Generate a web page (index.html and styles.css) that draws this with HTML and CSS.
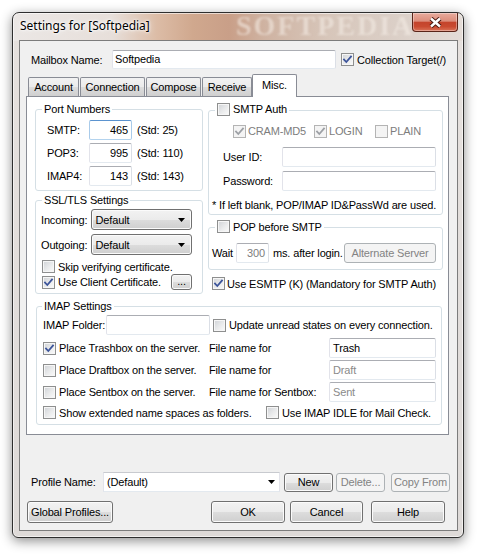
FILE: index.html
```html
<!DOCTYPE html>
<html>
<head>
<meta charset="utf-8">
<title>Settings for [Softpedia]</title>
<link rel="stylesheet" href="styles.css">
</head>
<body>
<div class="window">
  <div class="titlebar">
    <span class="title">Settings for [Softpedia]</span>
    <span class="wm-title">SOFTPEDIA</span>
    <span class="close"><svg width="13" height="11" viewBox="0 0 13 11"><path class="x-out" d="M2 1.5 11 9.5M11 1.5 2 9.5"/><path class="x-in" d="M2 1.5 11 9.5M11 1.5 2 9.5"/></svg></span>
  </div>
  <div class="client">
    <div class="mailbox">
      <span class="lbl-mailbox">Mailbox Name:</span>
      <span class="tb tb-mailbox">Softpedia</span>
      <span class="cb on cb-target"><svg viewBox="0 0 11 11"><path d="M2 5.5 4.3 8 9 2.5"/></svg></span>
      <span class="cbt">Collection Target(/)</span>
    </div>
    <div class="tabstrip">
      <span class="tab t-account">Account</span>
      <span class="tab t-connection">Connection</span>
      <span class="tab t-compose">Compose</span>
      <span class="tab t-receive">Receive</span>
      <span class="tab sel t-misc">Misc.</span>
    </div>
    <div class="panel">
      <div class="col">
        <fieldset class="grp grp-port">
          <legend>Port Numbers</legend>
          <div class="gbody port-body">
            <div class="prow"><span class="plbl">SMTP:</span><span class="tb num focus">465</span><span class="std">(Std: 25)</span></div>
            <div class="prow"><span class="plbl">POP3:</span><span class="tb num">995</span><span class="std">(Std: 110)</span></div>
            <div class="prow"><span class="plbl">IMAP4:</span><span class="tb num">143</span><span class="std">(Std: 143)</span></div>
          </div>
        </fieldset>
        <fieldset class="grp grp-ssl">
          <legend>SSL/TLS Settings</legend>
          <div class="gbody ssl-body">
            <div class="srow"><span class="slbl">Incoming:</span><span class="dd">Default<svg class="arr" width="7" height="4" viewBox="0 0 7 4"><path d="M0 0H7L3.5 4Z"/></svg></span></div>
            <div class="srow srow2"><span class="slbl">Outgoing:</span><span class="dd">Default<svg class="arr" width="7" height="4" viewBox="0 0 7 4"><path d="M0 0H7L3.5 4Z"/></svg></span></div>
            <div class="crow crow-skip"><span class="cb"></span><span class="cbt">Skip verifying certificate.</span></div>
            <div class="crow crow-client"><span class="cb on"><svg viewBox="0 0 11 11"><path d="M2 5.5 4.3 8 9 2.5"/></svg></span><span class="cbt">Use Client Certificate.</span><span class="btn btn-dots">...</span></div>
          </div>
        </fieldset>
      </div>
      <div class="col">
        <fieldset class="grp grp-auth">
          <legend><span class="leg"><span class="cb"></span><span class="cbt">SMTP Auth</span></span></legend>
          <div class="gbody auth-body">
            <div class="arow">
              <span class="am am-cram"><span class="cb on dis"><svg viewBox="0 0 11 11"><path d="M2 5.5 4.3 8 9 2.5"/></svg></span><span class="cbt dtext">CRAM-MD5</span></span>
              <span class="am am-login"><span class="cb on dis"><svg viewBox="0 0 11 11"><path d="M2 5.5 4.3 8 9 2.5"/></svg></span><span class="cbt dtext">LOGIN</span></span>
              <span class="am"><span class="cb dis"></span><span class="cbt dtext">PLAIN</span></span>
            </div>
            <div class="urow urow-id"><span class="ulbl">User ID:</span><span class="tb tb-user"></span></div>
            <div class="urow urow-pw"><span class="ulbl">Password:</span><span class="tb tb-user"></span></div>
            <div class="note">* If left blank, POP/IMAP ID&amp;PassWd are used.</div>
          </div>
        </fieldset>
        <fieldset class="grp grp-pop">
          <legend><span class="leg"><span class="cb"></span><span class="cbt">POP before SMTP</span></span></legend>
          <div class="gbody pop-body">
            <div class="wrow"><span class="wlbl">Wait</span><span class="tb num tb-wait dtext">300</span><span class="after">ms. after login.</span><span class="btn dis btn-alt">Alternate Server</span></div>
          </div>
        </fieldset>
        <div class="crow esmtp"><span class="cb on"><svg viewBox="0 0 11 11"><path d="M2 5.5 4.3 8 9 2.5"/></svg></span><span class="cbt cbt-tight">Use ESMTP (K) (Mandatory for SMTP Auth)</span></div>
      </div>
      <fieldset class="grp grp-imap">
        <legend>IMAP Settings</legend>
        <div class="gbody imap-body">
          <div class="frow"><span class="flbl">IMAP Folder:</span><span class="tb tb-folder"></span><span class="cb cb-update"></span><span class="cbt">Update unread states on every connection.</span></div>
          <div class="irow irow1"><span class="ic"><span class="cb on"><svg viewBox="0 0 11 11"><path d="M2 5.5 4.3 8 9 2.5"/></svg></span><span class="cbt">Place Trashbox on the server.</span></span><span>File name for</span><span class="tb tb-file">Trash</span></div>
          <div class="irow"><span class="ic"><span class="cb"></span><span class="cbt">Place Draftbox on the server.</span></span><span>File name for</span><span class="tb tb-file dtext2">Draft</span></div>
          <div class="irow irow3"><span class="ic"><span class="cb"></span><span class="cbt">Place Sentbox on the server.</span></span><span>File name for Sentbox:</span><span class="tb tb-file dtext2">Sent</span></div>
          <div class="xrow"><span class="ic"><span class="cb"></span><span class="cbt">Show extended name spaces as folders.</span></span><span class="ic"><span class="cb"></span><span class="cbt">Use IMAP IDLE for Mail Check.</span></span></div>
        </div>
      </fieldset>
    </div>
    <div class="profile">
      <span class="lbl-profile">Profile Name:</span>
      <span class="combo">(Default)<svg class="arr" width="7" height="4" viewBox="0 0 7 4"><path d="M0 0H7L3.5 4Z"/></svg></span>
      <span class="btn btn-new">New</span>
      <span class="btn dis btn-del">Delete...</span>
      <span class="btn dis btn-copy">Copy From</span>
    </div>
    <div class="actions">
      <span class="btn btn-global">Global Profiles...</span>
      <span class="btn btn-ok">OK</span>
      <span class="btn btn-cancel">Cancel</span>
      <span class="btn btn-help">Help</span>
    </div>
  </div>
</div>
</body>
</html>
```

FILE: styles.css
```css
* { box-sizing: border-box; }
html, body { margin: 0; background: #fff; }
body {
  width: 485px; height: 558px; overflow: hidden;
  font-family: "Liberation Sans", Arial, sans-serif;
  font-size: 11px; color: #000;
  letter-spacing: -0.15px;
  white-space: nowrap;
}

/* ---------- window frame ---------- */
.window {
  position: relative;
  margin: 12px 0 0 12px;
  width: 452px; height: 526px;
  border: 1px solid #2e2e2e;
  border-radius: 7px 7px 6px 6px;
  padding: 0 5px 6px 6px;
  display: flex; flex-direction: column;
  background:
    linear-gradient(to right, #ebe7e5 0%, #e7dfda 22%, #dcbca6 32%, #d0a88e 40%, #c99f88 48%, #cfb3a2 56%, #d7c6ba 70%, #dbcfc7 85%, #e4dcd7 100%) top left / 100% 28px no-repeat,
    linear-gradient(#e6e1de, #dedad8);
  box-shadow: 0 3px 12px rgba(0,0,0,.45), inset 0 0 0 1px rgba(255,255,255,.6);
}
.titlebar {
  position: relative;
  height: 27px; flex: none;
  display: flex; align-items: flex-start;
}
.title {
  margin: 5px 0 0 1px;
  font-family: "Noto Sans", "Liberation Sans", sans-serif;
  font-size: 12px; line-height: 16px; letter-spacing: 0;
  text-shadow: 0 0 6px #fff, 0 0 3px #fff, 0 0 2px #fff;
  position: relative; z-index: 1;
}
.wm-title {
  position: absolute; left: 217px; top: -3px;
  font: bold 28px "Liberation Serif", serif;
  letter-spacing: 2px;
  color: rgba(245, 238, 232, .55);
  filter: blur(1.3px);
  pointer-events: none;
}
.close {
  margin-left: auto;
  position: relative; z-index: 1;
  width: 46px; height: 19px;
  border: 1px solid #5a2418; border-top: none;
  border-radius: 0 0 4px 4px;
  background: linear-gradient(#e8ab9d 0%, #dc8d7b 45%, #c4442c 52%, #c94a30 75%, #da7358 100%);
  box-shadow: inset 0 0 0 1px rgba(255,255,255,.35);
  display: flex; align-items: center; justify-content: center;
}
.x-out { stroke: #45170f; stroke-width: 4.4; fill: none; }
.x-in { stroke: #fff; stroke-width: 2.4; fill: none; }

.client {
  flex: 1;
  border: 1px solid #7c7c7c;
  background: #f0f0f0;
  display: flex; flex-direction: column;
}

/* ---------- controls ---------- */
.tb {
  display: block; flex: none;
  height: 20px; line-height: 18px;
  padding: 0 3px;
  background: #fff;
  border: 1px solid; border-color: #abadb3 #dbdfe6 #e3e9ef #e2e3ea;
  border-radius: 2px;
  overflow: hidden;
}
.num { width: 43px; text-align: right; }
.focus { border-color: #5b93cf #a9cbea #b3d3ee #a9cbea; }
.cb {
  display: inline-flex; flex: none;
  width: 13px; height: 13px;
  border: 1px solid #8e8f8f;
  background: linear-gradient(135deg, #cfd2d6 0%, #eaebec 55%, #fbfbfb 100%);
  box-shadow: inset 0 0 0 1px #f6f6f6;
  align-items: center; justify-content: center;
}
.cb svg { width: 11px; height: 11px; }
.cb path { fill: none; stroke: #3c549a; stroke-width: 1.8; stroke-linecap: square; }
.cb.dis { border-color: #b4b4b4; background: #f4f4f4; box-shadow: none; }
.cb.dis path { stroke: #9da0a5; }
.cbt { margin-left: 3px; }
.cbt-tight { margin-left: 2px; }
.dtext { color: #7d7d7d; }
.dtext2 { color: #8a8a8a; }
.btn {
  display: flex; flex: none; align-items: center; justify-content: center;
  border: 1px solid #707070; border-radius: 3px;
  background: linear-gradient(#f2f2f2 0%, #ebebeb 50%, #dddddd 51%, #cfcfcf 100%);
  box-shadow: inset 0 0 0 1px #fbfbfb;
}
.btn.dis {
  border-color: #adb2b5; background: #f4f4f4; box-shadow: none; color: #838383;
}
.dd {
  display: flex; align-items: center; justify-content: space-between;
  width: 104px; height: 21px;
  padding: 0 6px 0 4px;
  border: 1px solid #707070; border-radius: 3px;
  background: linear-gradient(#f2f2f2 0%, #ebebeb 50%, #dddddd 51%, #cfcfcf 100%);
  box-shadow: inset 0 0 0 1px #fbfbfb;
}
.arr path { fill: #000; }

/* ---------- top row ---------- */
.mailbox {
  display: flex; align-items: center;
  height: 19px; margin-top: 9px; padding-left: 11px;
}
.lbl-mailbox { width: 81px; }
.tb-mailbox { width: 224px; height: 19px; line-height: 17px; padding-left: 2px; }
.cb-target { margin-left: 5px; }

/* ---------- tabs ---------- */
.tabstrip {
  position: relative; z-index: 1;
  display: flex; align-items: flex-end;
  height: 22px; margin: 5px 0 0 8px;
}
.tab {
  height: 19px; line-height: 18px; text-align: center;
  border: 1px solid #898c95; border-bottom: none;
  border-radius: 2px 2px 0 0;
  background: linear-gradient(#f2f2f2 0%, #ebebeb 50%, #dddddd 51%, #cfcfcf 100%);
  margin-right: 1px;
}
.t-account { width: 51px; }
.t-connection { width: 65px; }
.t-compose { width: 55px; }
.t-receive { width: 50px; margin-right: 0; }
.tab.sel {
  width: 45px; height: 23px; line-height: 20px;
  margin-bottom: -1px; background: #fff;
}

.panel {
  flex: none;
  width: 423px; height: 339px;
  margin-left: 6px;
  border: 1px solid #898c95;
  background: #fff;
  padding: 5px 0 0 8px;
  display: grid;
  grid-template-columns: 168px 235px;
  column-gap: 5px;
  align-content: start; align-items: start;
}
.col { display: flex; flex-direction: column; }

.grp {
  margin: 0; min-width: 0;
  border: 1px solid #d5dfe5; border-radius: 3px;
  padding: 0;
}
.grp legend { padding: 0 2px; margin-left: 6px; line-height: 14px; }
.leg { display: inline-flex; align-items: center; height: 14px; }

/* port numbers */
.grp-port { padding: 4px 0 4px 0; }
.port-body { padding-left: 11px; }
.prow { display: flex; align-items: center; height: 20px; }
.prow + .prow { margin-top: 3px; }
.plbl { width: 42px; }
.std { margin-left: 5px; }

/* ssl */
.grp-ssl { margin-top: 2px; padding: 2px 0 3px 0; }
.ssl-body { padding: 0 10px 0 5px; }
.srow { display: flex; align-items: center; height: 21px; }
.srow2 { margin-top: 4px; }
.slbl { width: 51px; }
.crow { display: flex; align-items: center; }
.crow-skip { height: 15px; margin-top: 4px; padding-left: 1px; }
.crow-client { height: 16px; padding-left: 1px; }
.btn-dots { margin-left: auto; width: 21px; height: 16px; padding-bottom: 3px; }

/* smtp auth */
.grp-auth { padding: 5px 0 2px 0; }
.auth-body { padding: 0 6px 0 3px; }
.arow { display: flex; align-items: center; height: 15px; margin-left: 21px; }
.am { display: flex; align-items: center; }
.am-cram { width: 81px; }
.am-login { width: 61px; }
.am .cbt { margin-left: 2px; }
.urow { display: flex; align-items: center; height: 20px; }
.urow-id { margin-top: 8px; }
.urow-pw { margin-top: 4px; }
.ulbl { width: 60px; margin-left: 11px; }
.tb-user { width: 154px; }
.note { margin-top: 7px; line-height: 14px; height: 14px; }

/* pop before smtp */
.grp-pop { margin-top: 5px; padding: 7px 0 6px 0; }
.pop-body { padding: 0 6px 0 3px; }
.wrow { display: flex; align-items: center; height: 20px; }
.wlbl { width: 24px; }
.tb-wait { width: 33px; }
.after { margin-left: 4px; }
.btn-alt { margin-left: auto; width: 92px; height: 20px; }

.esmtp { height: 15px; margin: 6px 0 0 4px; }

/* imap */
.grp-imap {
  grid-column: 1 / -1;
  width: 406px; margin: 5px 0 0 1px;
  padding: 2px 0 4px 0;
}
.grp-imap legend { margin-left: 5px; }
.imap-body { padding: 0 6px; }
.frow { display: flex; align-items: center; height: 20px; }
.flbl { width: 63px; }
.tb-folder { width: 104px; }
.cb-update { margin-left: 3px; }
.irow {
  display: grid; grid-template-columns: 166px 120px 107px;
  align-items: center; height: 20px; margin-top: 2px;
}
.irow1 { margin-top: 3px; }
.ic { display: flex; align-items: center; }
.tb-file { width: 107px; }
.xrow {
  display: grid; grid-template-columns: 223px auto;
  align-items: center; height: 15px; margin-top: 3px;
}

/* bottom */
.profile {
  display: flex; align-items: center;
  height: 20px; margin-top: 37px; padding-left: 11px;
}
.lbl-profile { width: 72px; }
.combo {
  display: flex; align-items: center; justify-content: space-between;
  width: 177px; height: 20px;
  padding: 0 4px 0 3px;
  background: #fff;
  border: 1px solid; border-color: #c8cacf #e2e3ea #e3e9ef #e2e3ea;
}
.btn-new { width: 49px; height: 19px; margin-left: 4px; }
.btn-del { width: 49px; height: 19px; margin-left: 3px; }
.btn-copy { width: 59px; height: 19px; margin-left: 6px; }

.actions {
  display: flex; align-items: center;
  height: 22px; margin-top: 9px; padding: 0 12px 0 7px;
}
.btn-global { width: 86px; height: 22px; }
.btn-ok { width: 74px; height: 22px; margin-left: auto; }
.btn-cancel { width: 73px; height: 22px; margin-left: 5px; }
.btn-help { width: 74px; height: 22px; margin-left: 8px; }
```
